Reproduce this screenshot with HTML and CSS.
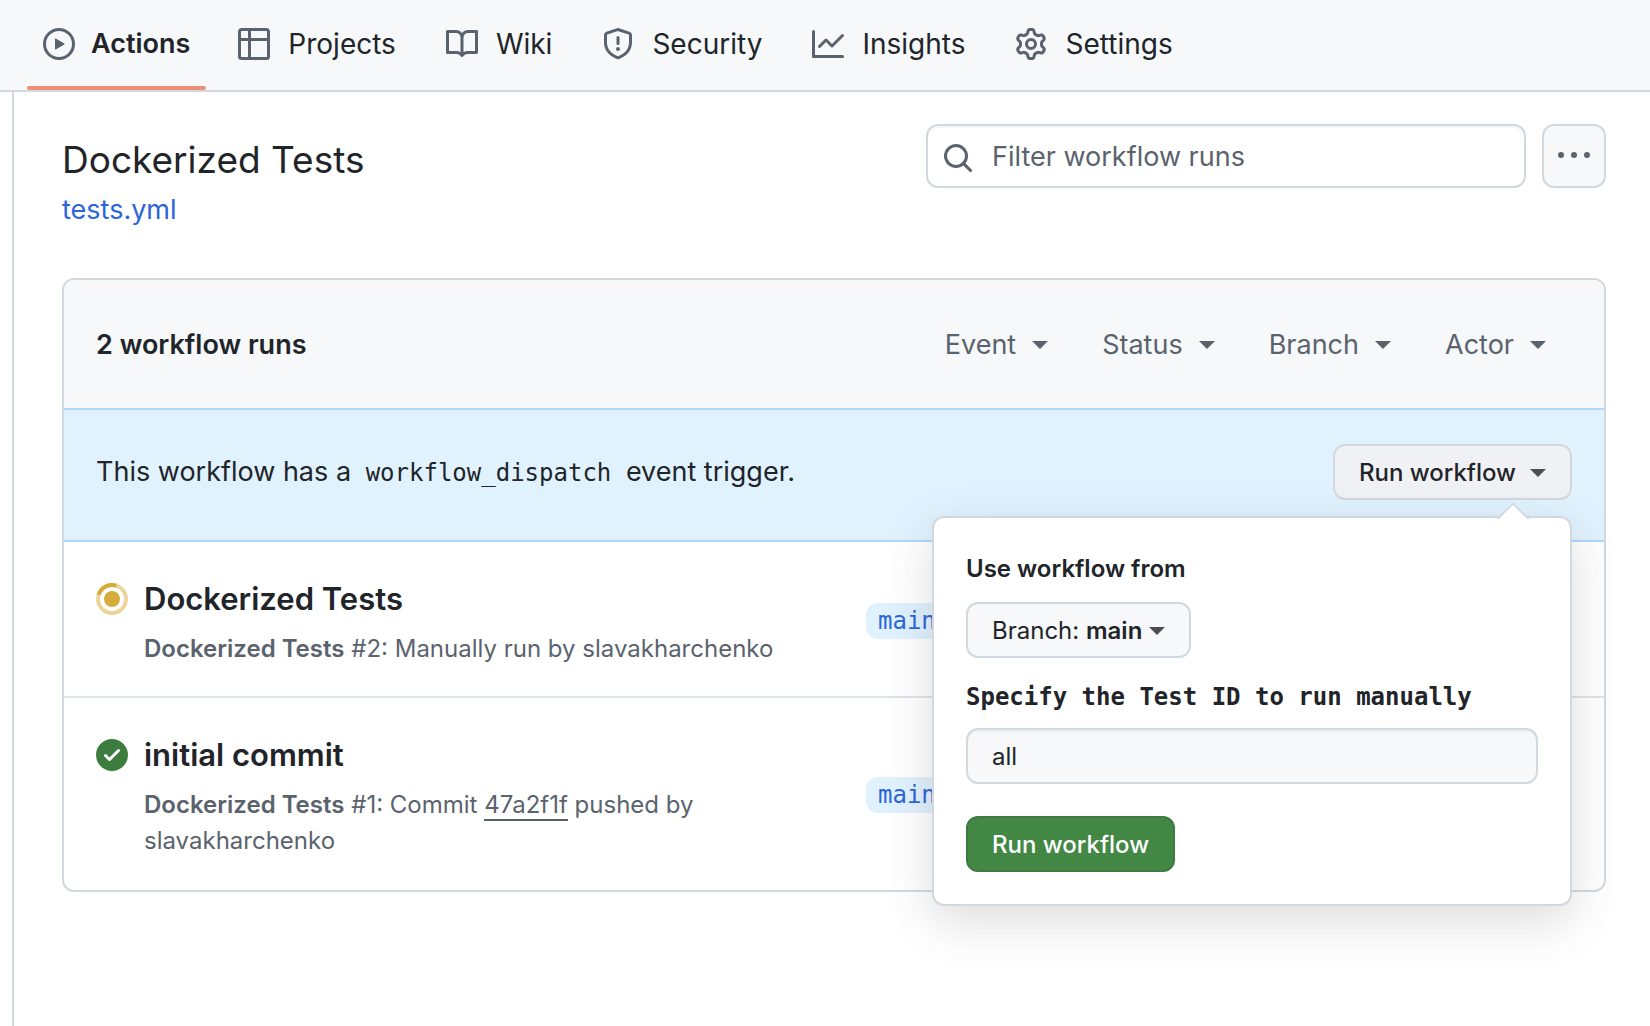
FILE: index.html
```html
<!DOCTYPE html>
<html lang="en">
<head>
<meta charset="utf-8">
<meta name="viewport" content="width=device-width, initial-scale=1">
<title>Dockerized Tests · Workflow runs</title>
<link rel="stylesheet" href="styles.css">
</head>
<body>
<nav class="repo-nav" aria-label="Repository">
  <a class="nav-item nav-item-current" href="#actions" aria-current="page">
    <svg class="icon" viewBox="0 0 16 16" aria-hidden="true"><path fill-rule="evenodd" d="M1.5 8a6.5 6.5 0 1113 0 6.5 6.5 0 01-13 0zM8 0a8 8 0 100 16A8 8 0 008 0zM6.379 5.227A.25.25 0 006 5.442v5.117a.25.25 0 00.379.214l4.264-2.559a.25.25 0 000-.428L6.379 5.227z"/></svg>
    <span>Actions</span>
  </a>
  <a class="nav-item" href="#projects">
    <svg class="icon" viewBox="0 0 16 16" aria-hidden="true"><path fill-rule="evenodd" d="M0 1.75C0 .784.784 0 1.75 0h12.5C15.216 0 16 .784 16 1.75v12.5A1.75 1.75 0 0114.25 16H1.75A1.75 1.75 0 010 14.25V1.75zM6.5 6.5v8h7.75a.25.25 0 00.25-.25V6.5h-8zm8-1.5V1.75a.25.25 0 00-.25-.25H6.5V5h8zm-13 1.5v7.75c0 .138.112.25.25.25H5v-8H1.5zM5 5V1.5H1.75a.25.25 0 00-.25.25V5H5z"/></svg>
    <span>Projects</span>
  </a>
  <a class="nav-item" href="#wiki">
    <svg class="icon" viewBox="0 0 16 16" aria-hidden="true"><path fill-rule="evenodd" d="M0 1.75A.75.75 0 01.75 1h4.253c1.227 0 2.317.59 3 1.501A3.744 3.744 0 0111.006 1h4.245a.75.75 0 01.75.75v10.5a.75.75 0 01-.75.75h-4.507a2.25 2.25 0 00-1.591.659l-.622.621a.75.75 0 01-1.06 0l-.622-.621A2.25 2.25 0 005.258 13H.75a.75.75 0 01-.75-.75V1.75zm8.755 3a2.25 2.25 0 012.25-2.25H14.5v9h-3.757c-.71 0-1.4.201-1.992.572l.004-7.322zm-1.504 7.324l.004-5.073-.002-2.253A2.25 2.25 0 005.003 2.5H1.5v9h3.757a3.75 3.75 0 011.994.574z"/></svg>
    <span>Wiki</span>
  </a>
  <a class="nav-item" href="#security">
    <svg class="icon" viewBox="0 0 16 16" aria-hidden="true"><path fill-rule="evenodd" d="M7.467.133a1.75 1.75 0 011.066 0l5.25 1.68A1.75 1.75 0 0115 3.48V7c0 1.566-.32 3.182-1.303 4.682-.983 1.498-2.585 2.813-5.032 3.855a1.7 1.7 0 01-1.33 0c-2.447-1.042-4.049-2.357-5.032-3.855C1.32 10.182 1 8.566 1 7V3.48a1.75 1.75 0 011.217-1.667l5.25-1.68zm.61 1.429a.25.25 0 00-.153 0l-5.25 1.68a.25.25 0 00-.174.238V7c0 1.358.275 2.666 1.057 3.86.784 1.194 2.121 2.34 4.366 3.297a.2.2 0 00.154 0c2.245-.956 3.582-2.104 4.366-3.298C13.225 9.666 13.5 8.36 13.5 7V3.48a.25.25 0 00-.174-.237l-5.25-1.68zM9 10.5a1 1 0 11-2 0 1 1 0 012 0zm-.25-5.75v3a.75.75 0 11-1.5 0v-3a.75.75 0 011.5 0z"/></svg>
    <span>Security</span>
  </a>
  <a class="nav-item" href="#insights">
    <svg class="icon" viewBox="0 0 16 16" aria-hidden="true"><path fill-rule="evenodd" d="M1.5 1.75a.75.75 0 00-1.5 0v12.5c0 .414.336.75.75.75h14.5a.75.75 0 000-1.5H1.5V1.75zm14.28 2.53a.75.75 0 00-1.06-1.06L10 7.94 7.53 5.47a.75.75 0 00-1.06 0L3.22 8.72a.75.75 0 001.06 1.06L7 7.06l2.47 2.47a.75.75 0 001.06 0l5.25-5.25z"/></svg>
    <span>Insights</span>
  </a>
  <a class="nav-item" href="#settings">
    <svg class="icon" viewBox="0 0 16 16" aria-hidden="true"><path fill-rule="evenodd" d="M8 0a8.2 8.2 0 01.701.031C9.444.095 9.99.645 10.16 1.29l.288 1.107c.018.066.079.158.212.224.231.114.454.243.668.386.123.082.233.09.299.071l1.103-.303c.644-.176 1.392.021 1.82.63.27.385.506.792.704 1.218.315.675.111 1.422-.364 1.891l-.814.806c-.049.048-.098.147-.088.294.016.257.016.515 0 .772-.01.147.038.246.088.294l.814.806c.475.469.679 1.216.364 1.891a7.977 7.977 0 01-.704 1.217c-.428.61-1.176.807-1.82.63l-1.102-.302c-.067-.019-.177-.011-.3.071a5.909 5.909 0 01-.668.386c-.133.066-.194.158-.211.224l-.29 1.106c-.168.646-.715 1.196-1.458 1.26a8.006 8.006 0 01-1.402 0c-.743-.064-1.289-.614-1.458-1.26l-.289-1.106c-.018-.066-.079-.158-.212-.224a5.738 5.738 0 01-.668-.386c-.123-.082-.233-.09-.299-.071l-1.103.303c-.644.176-1.392-.021-1.82-.63a8.12 8.12 0 01-.704-1.218c-.315-.675-.111-1.422.363-1.891l.815-.806c.05-.048.098-.147.088-.294a6.214 6.214 0 010-.772c.01-.147-.038-.246-.088-.294l-.815-.806C.635 6.045.431 5.298.746 4.623a7.92 7.92 0 01.704-1.217c.428-.61 1.176-.807 1.82-.63l1.102.302c.067.019.177.011.3-.071.214-.143.437-.272.668-.386.133-.066.194-.158.211-.224l.29-1.106C6.009.645 6.556.095 7.299.03 7.53.01 7.764 0 8 0zm-.571 1.525c-.036.003-.108.036-.137.146l-.289 1.105c-.147.561-.549.967-.998 1.189-.173.086-.34.183-.5.29-.417.278-.97.423-1.529.27l-1.103-.303c-.109-.03-.175.016-.195.045-.22.312-.412.644-.573.99-.014.031-.021.11.059.19l.815.806c.411.406.562.957.53 1.456a4.709 4.709 0 000 .582c.032.499-.119 1.05-.53 1.456l-.815.806c-.081.08-.073.159-.059.19.162.346.353.677.573.989.02.03.085.076.195.046l1.102-.303c.56-.153 1.113-.008 1.53.27.161.107.328.204.501.29.447.222.85.629.997 1.189l.289 1.105c.029.109.101.143.137.146a6.6 6.6 0 001.142 0c.036-.003.108-.036.137-.146l.289-1.105c.147-.561.549-.967.998-1.189.173-.086.34-.183.5-.29.417-.278.97-.423 1.529-.27l1.103.303c.109.029.175-.016.195-.045.22-.313.411-.644.573-.99.014-.031.021-.11-.059-.19l-.815-.806c-.411-.406-.562-.957-.53-1.456a4.709 4.709 0 000-.582c-.032-.499.119-1.05.53-1.456l.815-.806c.081-.08.073-.159.059-.19a6.464 6.464 0 00-.573-.989c-.02-.03-.085-.076-.195-.046l-1.102.303c-.56.153-1.113.008-1.53-.27a4.44 4.44 0 00-.501-.29c-.447-.222-.85-.629-.997-1.189l-.289-1.105c-.029-.11-.101-.143-.137-.146a6.6 6.6 0 00-1.142 0zM11 8a3 3 0 11-6 0 3 3 0 016 0zM9.5 8a1.5 1.5 0 10-3.001.001A1.5 1.5 0 009.5 8z"/></svg>
    <span>Settings</span>
  </a>
</nav>

<main class="content">
  <header class="page-head">
    <div class="page-title">
      <h1>Dockerized Tests</h1>
      <a class="file-link" href="#tests-yml">tests.yml</a>
    </div>
    <div class="page-tools">
      <label class="search">
        <svg class="icon" viewBox="0 0 16 16" aria-hidden="true"><path fill-rule="evenodd" d="M11.5 7a4.499 4.499 0 11-8.998 0A4.499 4.499 0 0111.5 7zm-.82 4.74a6 6 0 111.06-1.06l3.04 3.04a.75.75 0 11-1.06 1.06l-3.04-3.04z"/></svg>
        <input type="search" placeholder="Filter workflow runs" aria-label="Filter workflow runs">
      </label>
      <button class="more" type="button" aria-label="Show workflow options">
        <svg class="icon" viewBox="0 0 16 16" aria-hidden="true"><circle cx="1.5" cy="8" r="1.5"/><circle cx="8" cy="8" r="1.5"/><circle cx="14.5" cy="8" r="1.5"/></svg>
      </button>
    </div>
  </header>

  <section class="runs">
    <div class="runs-head">
      <h2>2 workflow runs</h2>
      <div class="filters">
        <button class="filter" type="button">Event<span class="caret"></span></button>
        <button class="filter" type="button">Status<span class="caret"></span></button>
        <button class="filter" type="button">Branch<span class="caret"></span></button>
        <button class="filter" type="button">Actor<span class="caret"></span></button>
      </div>
    </div>

    <div class="dispatch">
      <p>This workflow has a <code>workflow_dispatch</code> event trigger.</p>
      <div class="dispatch-menu">
        <button class="btn btn-open" type="button" aria-expanded="true">Run workflow<span class="caret"></span></button>
        <form class="popover">
          <h3>Use workflow from</h3>
          <button class="btn btn-branch" type="button"><span>Branch: <b>main</b></span><span class="caret"></span></button>
          <label class="field-label" for="test-id">Specify the Test ID to run manually</label>
          <input class="field" id="test-id" type="text" value="all">
          <button class="btn btn-primary" type="button">Run workflow</button>
        </form>
      </div>
    </div>

    <article class="run">
      <svg class="icon run-icon" viewBox="0 0 16 16" role="img" aria-label="In progress"><circle cx="8" cy="8" r="7" fill="none" stroke="#ead69b" stroke-width="2"/><path fill="none" stroke="#d4ac39" stroke-width="2" d="M1.3 5.97A7 7 0 0110.2 1.36"/><circle cx="8" cy="8" r="4" fill="#d4ac39"/></svg>
      <div class="run-text">
        <a class="run-title" href="#run-2">Dockerized Tests</a>
        <p><b>Dockerized Tests</b> #2: Manually run by slavakharchenko</p>
      </div>
      <div class="run-branch"><a class="branch" href="#main">main</a></div>
    </article>
    <article class="run">
      <svg class="icon run-icon" viewBox="0 0 16 16" role="img" aria-label="Completed"><path fill="#3c7d3f" fill-rule="evenodd" d="M8 16A8 8 0 108 0a8 8 0 000 16zm3.78-9.72a.75.75 0 00-1.06-1.06L6.75 9.19 5.28 7.72a.75.75 0 00-1.06 1.06l2 2a.75.75 0 001.06 0l4.5-4.5z"/></svg>
      <div class="run-text">
        <a class="run-title" href="#run-1">initial commit</a>
        <p><b>Dockerized Tests</b> #1: Commit <a class="commit" href="#47a2f1f">47a2f1f</a> pushed by slavakharchenko</p>
      </div>
      <div class="run-branch"><a class="branch" href="#main">main</a></div>
    </article>
  </section>
</main>
</body>
</html>
```
FILE: styles.css
```css
:root {
  --text: #212429;
  --muted: #5a636d;
  --link: #2c65d9;
  --line: #d1d9df;
  --subtle: #f6f8fa;
  --mono: "DejaVu Sans Mono", monospace;
}

* {
  box-sizing: border-box;
}

body {
  margin: 0;
  min-height: 100vh;
  display: flex;
  flex-direction: column;
  background: #fff;
  color: var(--text);
  font: 27px/40px Inter, "Liberation Sans", sans-serif;
}

h1, h2, h3, p {
  margin: 0;
}

h2, h3, b {
  font-weight: 600;
}

a {
  color: inherit;
  text-decoration: none;
}

button, input {
  font: inherit;
  color: inherit;
}

.icon {
  width: 32px;
  height: 32px;
  flex: none;
  fill: var(--muted);
}

.caret {
  border: 8px solid transparent;
  border-top-color: currentColor;
  border-bottom-width: 0;
}

/* Repository navigation */

.repo-nav {
  display: flex;
  gap: 16px;
  padding-left: 27px;
  background: var(--subtle);
  border-bottom: 2px solid var(--line);
}

.nav-item {
  position: relative;
  display: flex;
  align-items: center;
  gap: 18px;
  padding: 20px 18px 22px 16px;
  font-size: 28px;
  line-height: 48px;
}

.nav-item-current {
  gap: 16px;
  padding-right: 16px;
  font-size: 27px;
  font-weight: 600;
}

.nav-item-current::after {
  content: "";
  position: absolute;
  left: 0;
  right: 0;
  bottom: 0;
  height: 4px;
  border-radius: 2px;
  background: #ed9078;
}

/* Page header */

.content {
  flex: 1;
  margin-left: 12px;
  padding: 32px 44px 32px 48px;
  border-left: 2px solid var(--line);
}

.page-head {
  display: flex;
  justify-content: space-between;
  align-items: flex-start;
  margin-bottom: 48px;
}

.page-title {
  padding-top: 6px;
}

h1 {
  font-size: 37px;
  font-weight: 400;
  line-height: 60px;
}

.file-link {
  display: block;
  color: var(--link);
}

.page-tools {
  display: flex;
  gap: 16px;
}

.search {
  display: flex;
  align-items: center;
  gap: 18px;
  width: 600px;
  height: 64px;
  padding: 0 14px;
  border: 2px solid var(--line);
  border-radius: 12px;
  box-shadow: inset 0 2px 0 #f4f6f8;
}

.search .icon {
  margin-top: 4px;
}

.search input {
  flex: 1;
  min-width: 0;
  padding: 2px 0 0;
  border: 0;
  outline: 0;
  background: none;
}

.search input::placeholder {
  color: var(--muted);
  opacity: 1;
}

.more {
  display: grid;
  place-items: center;
  width: 64px;
  height: 64px;
  padding: 0 0 2px;
  background: var(--subtle);
  border: 2px solid var(--line);
  border-radius: 12px;
}

/* Runs list */

.runs {
  border: 2px solid var(--line);
  border-radius: 12px;
}

.runs-head {
  display: flex;
  justify-content: space-between;
  align-items: center;
  padding: 45px 32px 43px;
  background: var(--subtle);
  border-radius: 10px 10px 0 0;
}

h2 {
  font-size: 27px;
}

.filters {
  display: flex;
  gap: 54px;
  padding-right: 26px;
}

.filter {
  display: flex;
  align-items: center;
  gap: 16px;
  padding: 0;
  border: 0;
  background: none;
  color: var(--muted);
}

.dispatch {
  display: flex;
  justify-content: space-between;
  align-items: center;
  padding: 34px 32px 40px;
  background: #e0f2fe;
  border: 2px solid #afd6fb;
  border-width: 2px 0;
}

code {
  padding: 0 7px;
  font-family: var(--mono);
  font-size: 24px;
}

.dispatch-menu {
  position: relative;
}

.btn {
  display: flex;
  align-items: center;
  width: max-content;
  height: 56px;
  padding: 2px 24px 0;
  border: 2px solid var(--line);
  border-radius: 12px;
  background: var(--subtle);
  font-size: 24px;
}

.btn .caret {
  color: #4b4e54;
}

.btn-open {
  gap: 14px;
  background: #f0f1f5;
  font-weight: 500;
}

.btn-branch {
  gap: 7px;
}

.btn-primary {
  background: #438745;
  border-color: #3c7a40;
  color: #fff;
  font-weight: 500;
}

.popover {
  position: absolute;
  z-index: 1;
  top: 72px;
  right: 0;
  width: 640px;
  padding: 33px 32px 32px;
  background: #fff;
  border: 2px solid var(--line);
  border-radius: 12px;
  box-shadow: 0 16px 48px rgba(64, 64, 64, 0.18);
}

.popover::before {
  content: "";
  position: absolute;
  top: -11px;
  right: 45px;
  width: 22px;
  height: 22px;
  background: #fff;
  border: 2px solid var(--line);
  border-width: 2px 0 0 2px;
  transform: rotate(45deg);
  clip-path: polygon(0 0, 100% 0, 0 100%);
}

.popover h3 {
  margin-bottom: 15px;
  font-size: 24px;
  line-height: 36px;
}

.field-label {
  display: block;
  margin: 21px 0 13px;
  font: bold 24px/36px var(--mono);
}

.field {
  display: block;
  width: 100%;
  height: 56px;
  margin-bottom: 32px;
  padding: 0 24px;
  background: var(--subtle);
  border: 2px solid var(--line);
  border-radius: 12px;
  box-shadow: inset 0 2px 0 #eef1f4;
  font-size: 24px;
}

.run {
  display: grid;
  grid-template-columns: 32px minmax(0, 9fr) minmax(0, 9fr);
  column-gap: 16px;
  padding: 32px 32px 29px;
}

.run + .run {
  padding-bottom: 31px;
  border-top: 2px solid #dfe4e8;
}

.run-icon {
  margin-top: 9px;
}

.run-title {
  display: block;
  margin-bottom: 7px;
  font-size: 31px;
  font-weight: 600;
  line-height: 50px;
}

.run-text p {
  color: var(--muted);
  font-size: 24px;
  line-height: 36px;
}

.commit {
  border-bottom: 2px solid var(--muted);
}

.run-branch {
  align-self: center;
  display: flex;
}

.branch {
  padding: 0 12px;
  border-radius: 12px;
  background: #e0f2fe;
  color: var(--link);
  font: 24px/36px var(--mono);
}
```
